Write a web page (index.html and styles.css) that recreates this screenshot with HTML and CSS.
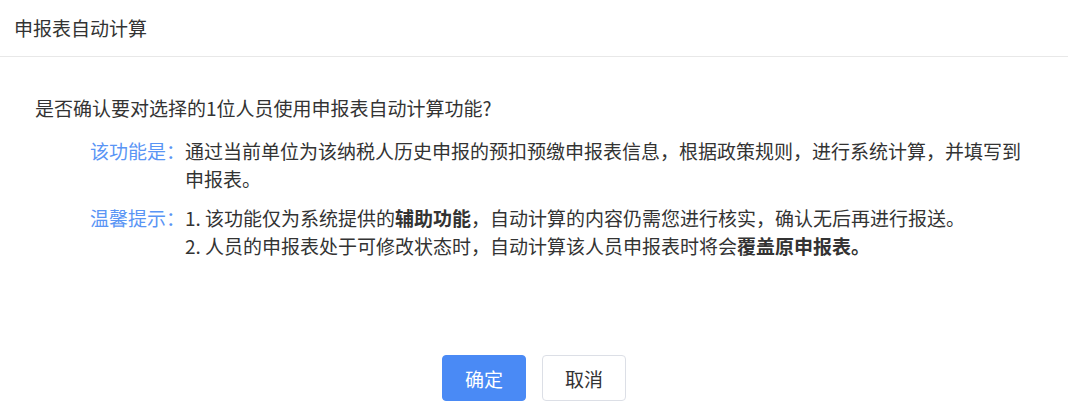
FILE: index.html
```html
<!DOCTYPE html>
<html lang="zh-CN">
<head>
  <meta charset="UTF-8" />
  <meta name="viewport" content="width=device-width, initial-scale=1.0"/>
  <title>申报表自动计算</title>
  <link rel="stylesheet" href="styles.css">
</head>
<body>
  <div class="dialog">
    <div class="dialog-header">申报表自动计算</div>

    <div class="dialog-body">
      <p class="question">是否确认要对选择的1位人员使用申报表自动计算功能?</p>

      <div class="info-list">
        <div class="info-label">该功能是：</div>
        <div class="info-text">通过当前单位为该纳税人历史申报的预扣预缴申报表信息，根据政策规则，进行系统计算，并填写到申报表。</div>

        <div class="info-label">温馨提示：</div>
        <div class="info-text">
          <div>1. 该功能仅为系统提供的<b>辅助功能</b>，自动计算的内容仍需您进行核实，确认无后再进行报送。</div>
          <div>2. 人员的申报表处于可修改状态时，自动计算该人员申报表时将会<b>覆盖原申报表。</b></div>
        </div>
      </div>
    </div>

    <div class="dialog-footer">
      <button class="btn btn-primary">确定</button>
      <button class="btn">取消</button>
    </div>
  </div>
</body>
</html>
```

FILE: styles.css
```css
html, body {
  margin: 0;
  padding: 0;
  background-color: white;
  color: #333;
  font-family: "Noto Sans CJK SC", "Noto Sans", sans-serif;
  font-size: 19px;
}

.dialog {
  width: 1068px;
}

.dialog-header {
  height: 56px;
  line-height: 56px;
  padding-left: 14px;
  border-bottom: 1px solid #e8e8e8;
  color: #333;
}

.dialog-body {
  padding: 37px 38px 0 35px;
  line-height: 28px;
}

.question {
  margin: 0 0 15px 0;
}

.info-list {
  display: grid;
  grid-template-columns: 95px 1fr;
  row-gap: 11px;
  margin-left: 55px;
}

.info-label {
  color: #5a95f5;
  white-space: nowrap;
}

.info-text b {
  font-weight: bold;
}

.dialog-footer {
  display: flex;
  justify-content: center;
  gap: 16px;
  margin-top: 95px;
}

.btn {
  width: 84px;
  height: 46px;
  border: 1px solid #dcdfe6;
  border-radius: 4px;
  background-color: white;
  color: #333;
  font-family: inherit;
  font-size: 19px;
  padding: 0;
}

.btn-primary {
  background-color: #4a8af5;
  border-color: #4a8af5;
  color: white;
}
```
